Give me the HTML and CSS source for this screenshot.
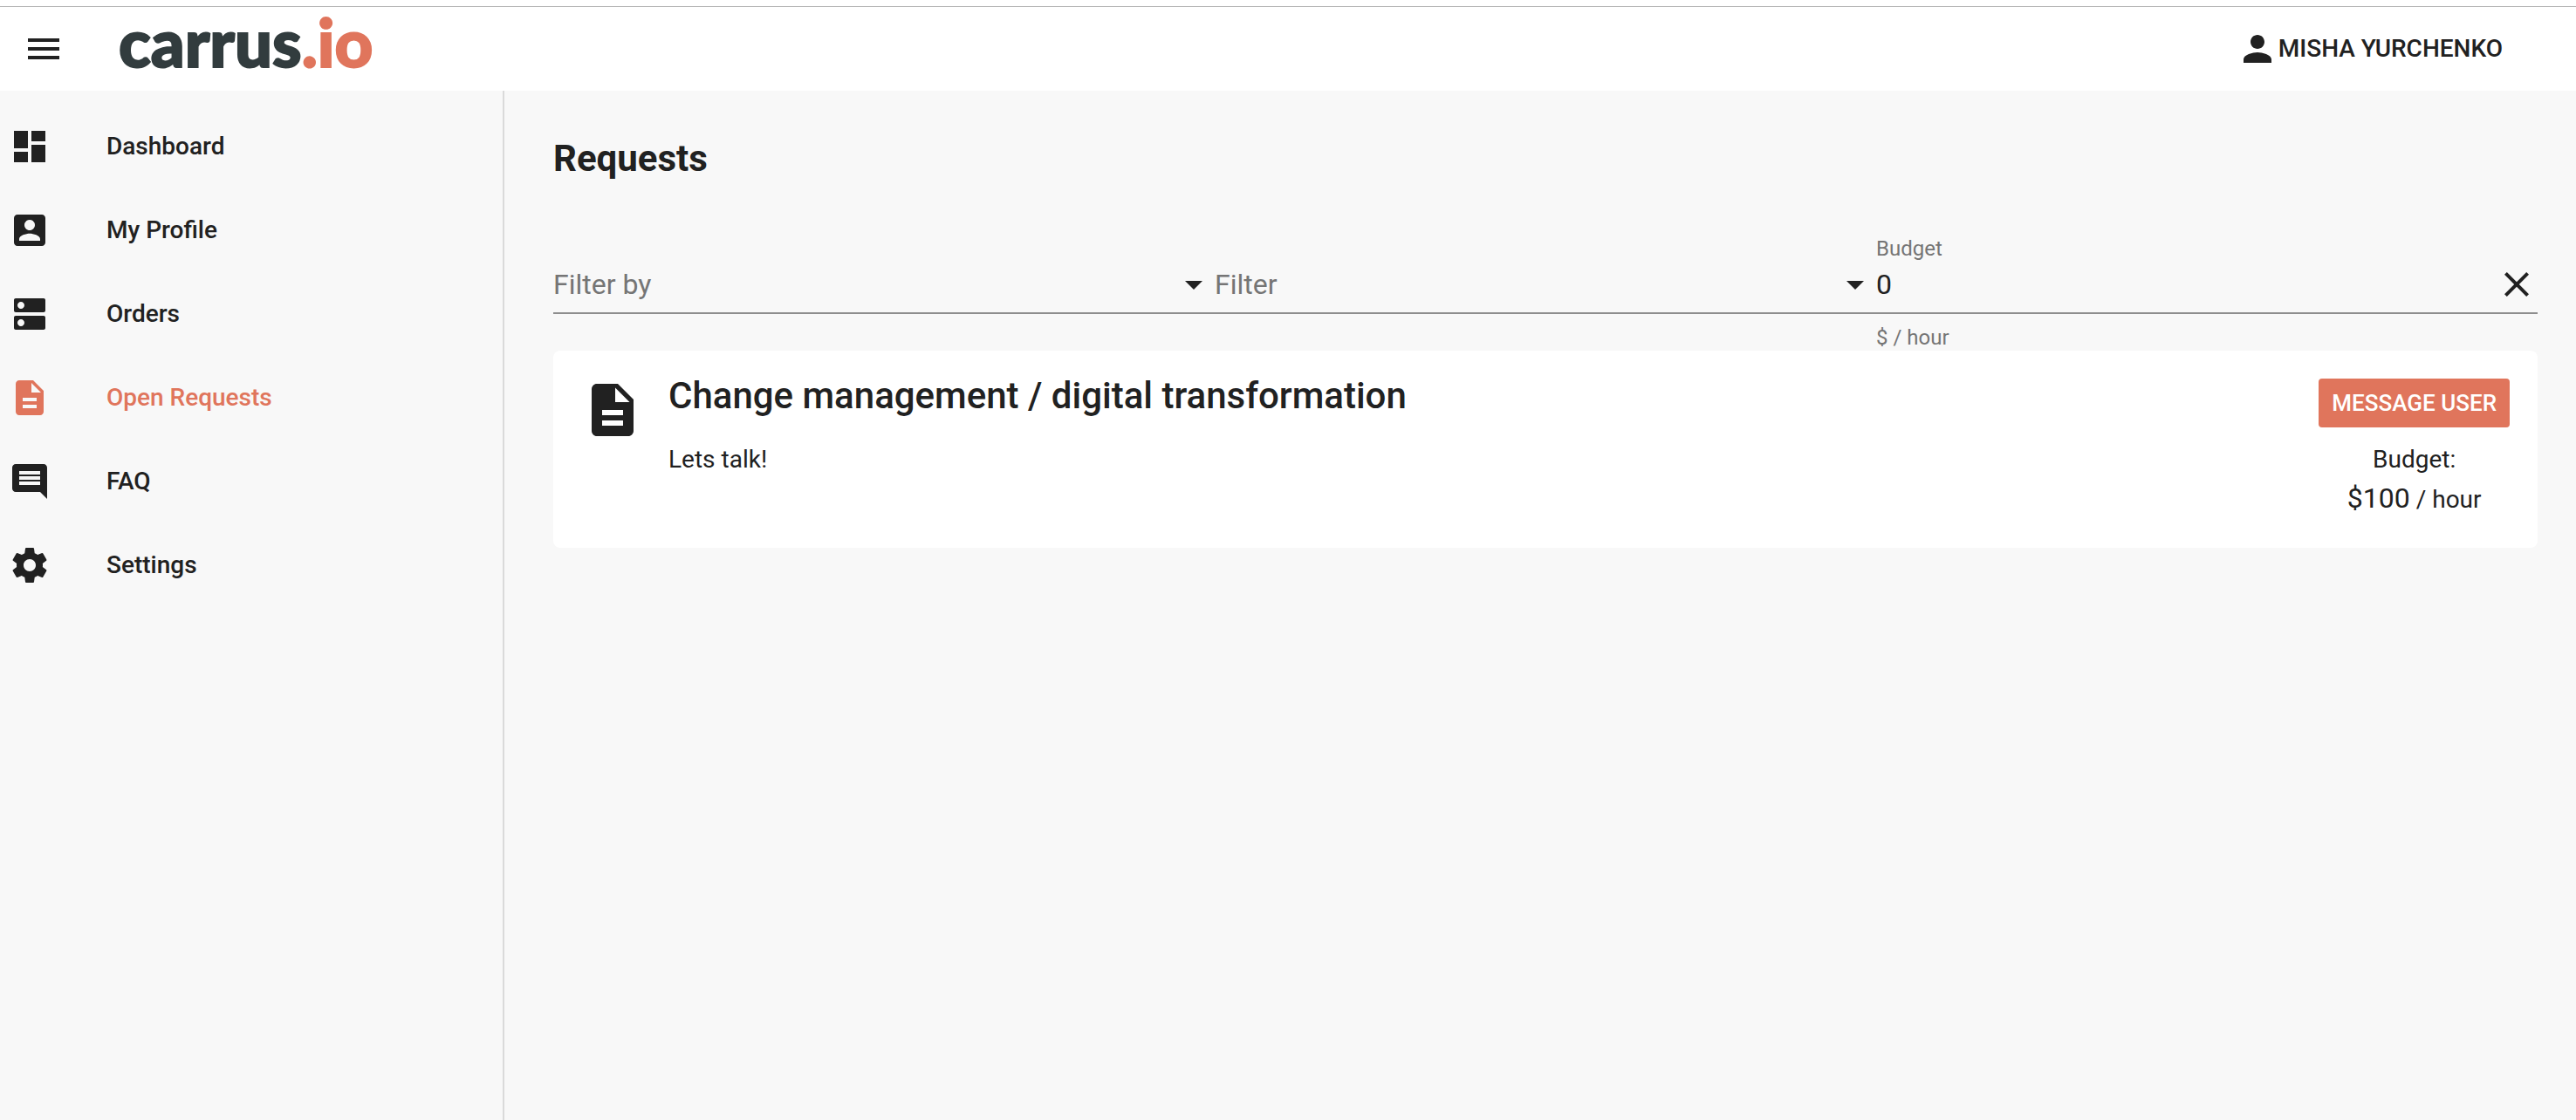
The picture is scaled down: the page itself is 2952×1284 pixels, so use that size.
FILE: index.html
```html
<!DOCTYPE html>
<html lang="en">
<head>
<meta charset="utf-8">
<meta name="viewport" content="width=device-width, initial-scale=1">
<title>Requests</title>
<link rel="stylesheet" href="styles.css">
</head>
<body>
<header class="topbar">
  <button class="icon-button" type="button" aria-label="Menu">
    <svg class="icon" viewBox="0 0 24 24"><path d="M3 18h18v-2H3v2zm0-5h18v-2H3v2zm0-7v2h18V6H3z"/></svg>
  </button>
  <a class="logo" href="#">carrus<span class="logo-accent">.io</span></a>
  <button class="user" type="button">
    <svg class="icon" viewBox="0 0 24 24"><path d="M12 12c2.21 0 4-1.79 4-4s-1.79-4-4-4-4 1.79-4 4 1.79 4 4 4zm0 2c-2.67 0-8 1.34-8 4v2h16v-2c0-2.66-5.33-4-8-4z"/></svg>
    <span>MISHA YURCHENKO</span>
  </button>
</header>
<div class="layout">
  <nav class="sidebar">
    <a class="nav-item" href="#">
      <svg class="icon" viewBox="0 0 24 24"><path d="M3 13h8V3H3v10zm0 8h8v-6H3v6zm10 0h8V11h-8v10zm0-18v6h8V3h-8z"/></svg>
      <span>Dashboard</span>
    </a>
    <a class="nav-item" href="#">
      <svg class="icon" viewBox="0 0 24 24"><path d="M3 5v14c0 1.1.89 2 2 2h14c1.1 0 2-.9 2-2V5c0-1.1-.9-2-2-2H5c-1.11 0-2 .9-2 2zm12 4c0 1.66-1.34 3-3 3s-3-1.34-3-3 1.34-3 3-3 3 1.34 3 3zm-9 8c0-2 4-3.1 6-3.1s6 1.1 6 3.1v1H6v-1z"/></svg>
      <span>My Profile</span>
    </a>
    <a class="nav-item" href="#">
      <svg class="icon" viewBox="0 0 24 24"><path d="M20 13H4c-.55 0-1 .45-1 1v6c0 .55.45 1 1 1h16c.55 0 1-.45 1-1v-6c0-.55-.45-1-1-1zM7 19c-1.1 0-2-.9-2-2s.9-2 2-2 2 .9 2 2-.9 2-2 2zM20 3H4c-.55 0-1 .45-1 1v6c0 .55.45 1 1 1h16c.55 0 1-.45 1-1V4c0-.55-.45-1-1-1zM7 9c-1.1 0-2-.9-2-2s.9-2 2-2 2 .9 2 2-.9 2-2 2z"/></svg>
      <span>Orders</span>
    </a>
    <a class="nav-item nav-item-active" href="#" aria-current="page">
      <svg class="icon" viewBox="0 0 24 24"><path d="M14 2H6c-1.1 0-1.99.9-1.99 2L4 20c0 1.1.89 2 1.99 2H18c1.1 0 2-.9 2-2V8l-6-6zm2 16H8v-2h8v2zm0-4H8v-2h8v2zm-3-5V3.500L18.500 9H13z"/></svg>
      <span>Open Requests</span>
    </a>
    <a class="nav-item" href="#">
      <svg class="icon" viewBox="0 0 24 24"><path d="M21.990 4c0-1.100-.890-2-1.990-2H4c-1.100 0-2 .900-2 2v12c0 1.100.900 2 2 2h14l4 4-.010-18zM18 14H6v-2h12v2zm0-3H6V9h12v2zm0-3H6V6h12v2z"/></svg>
      <span>FAQ</span>
    </a>
    <a class="nav-item" href="#">
      <svg class="icon" viewBox="0 0 24 24"><path d="M19.430 12.980c.040-.320.070-.640.070-.980s-.030-.660-.070-.980l2.110-1.650c.190-.150.240-.420.120-.640l-2-3.460c-.120-.220-.390-.300-.610-.220l-2.490 1c-.520-.400-1.080-.730-1.690-.980l-.380-2.650C14.460 2.180 14.250 2 14 2h-4c-.250 0-.460.180-.490.420l-.380 2.650c-.610.250-1.170.590-1.690.980l-2.490-1c-.230-.090-.490 0-.610.220l-2 3.460c-.130.220-.070.490.120.640l2.110 1.650c-.040.320-.070.650-.070.980s.030.660.070.980l-2.110 1.650c-.190.150-.240.420-.120.640l2 3.460c.120.220.390.300.610.220l2.490-1c.520.400 1.080.730 1.690.980l.380 2.650c.030.240.240.420.490.420h4c.250 0 .460-.180.490-.420l.380-2.650c.610-.250 1.170-.590 1.690-.980l2.490 1c.230.090.490 0 .610-.220l2-3.460c.120-.220.070-.490-.120-.640l-2.110-1.650zM12 15.500c-1.930 0-3.500-1.570-3.500-3.500s1.570-3.500 3.500-3.500 3.500 1.570 3.500 3.500-1.570 3.500-3.500 3.500z"/></svg>
      <span>Settings</span>
    </a>
  </nav>
  <main class="content">
    <h1 class="page-title">Requests</h1>
    <form class="filters">
      <div class="field">
        <div class="control">
          <select class="input input-empty" aria-label="Filter by"><option>Filter by</option></select>
          <svg class="icon" viewBox="0 0 24 24"><path d="M7 10l5 5 5-5z"/></svg>
        </div>
      </div>
      <div class="field">
        <div class="control">
          <select class="input input-empty" aria-label="Filter"><option>Filter</option></select>
          <svg class="icon" viewBox="0 0 24 24"><path d="M7 10l5 5 5-5z"/></svg>
        </div>
      </div>
      <div class="field">
        <label class="field-label" for="budget">Budget</label>
        <div class="control">
          <input class="input" id="budget" type="text" inputmode="numeric" value="0" aria-describedby="budget-unit">
          <button class="icon-button" type="reset" aria-label="Clear">
            <svg class="icon" viewBox="0 0 24 24"><path d="M19 6.410L17.590 5 12 10.590 6.410 5 5 6.410 10.590 12 5 17.590 6.410 19 12 13.410 17.590 19 19 17.590 13.410 12z"/></svg>
          </button>
        </div>
      </div>
      <p class="field-help" id="budget-unit">$ / hour</p>
    </form>
    <article class="card">
      <svg class="icon icon-large" viewBox="0 0 24 24"><path d="M14 2H6c-1.100 0-1.990.900-1.990 2L4 20c0 1.100.890 2 1.990 2H18c1.100 0 2-.900 2-2V8l-6-6zm2 16H8v-2h8v2zm0-4H8v-2h8v2zm-3-5V3.500L18.500 9H13z"/></svg>
      <div class="card-body">
        <h2 class="card-title">Change management / digital transformation</h2>
        <p class="card-text">Lets talk!</p>
      </div>
      <div class="card-side">
        <button class="primary-button" type="button">MESSAGE USER</button>
        <p class="budget-label">Budget:</p>
        <p class="price"><span class="amount">$100</span> / hour</p>
      </div>
    </article>
  </main>
</div>
</body>
</html>
```
FILE: styles.css
```css
* {
  box-sizing: border-box;
}

:root {
  --ink: #212121;
  --muted: #757575;
  --accent: #e0755c;
  --surface: #f8f8f8;
}

body {
  margin: 0;
  min-height: 100vh;
  display: flex;
  flex-direction: column;
  padding-top: 7px;
  background: #fff;
  color: var(--ink);
  font-family: Roboto, sans-serif;
  font-size: 28px;
  line-height: 34px;
}

h1, h2, p {
  margin: 0;
}

button, input, select {
  margin: 0;
  padding: 0;
  border: 0;
  background: none;
  color: inherit;
  font: inherit;
}

a {
  color: inherit;
  text-decoration: none;
}

.icon {
  display: block;
  flex: none;
  width: 48px;
  height: 48px;
  fill: currentColor;
}

.icon-large {
  width: 72px;
  height: 72px;
}

.icon-button {
  flex: none;
}

.topbar {
  display: flex;
  align-items: center;
  height: 97px;
  padding: 0 84px 0 26px;
  border-top: 1px solid #b4b4b4;
}

.logo {
  margin-left: 62px;
  padding-bottom: 16px;
  color: #323c3e;
  font-family: Lato, sans-serif;
  font-size: 76px;
  font-weight: 900;
  line-height: 80px;
  -webkit-text-stroke: 2px currentColor;
}

.logo-accent {
  color: var(--accent);
}

.user {
  display: flex;
  align-items: center;
  margin-left: auto;
  font-weight: 500;
}

.layout {
  flex: 1;
  display: flex;
  background: var(--surface);
}

.sidebar {
  flex: none;
  width: 578px;
  padding-top: 16px;
  border-right: 2px solid #dadada;
}

.nav-item {
  display: flex;
  align-items: center;
  gap: 64px;
  height: 96px;
  padding-left: 10px;
  font-weight: 500;
}

.nav-item-active {
  color: var(--accent);
}

.content {
  flex: 1;
  padding: 54px 44px 0 56px;
}

.page-title {
  margin-bottom: 64px;
  font-size: 42px;
  font-weight: 700;
  line-height: 48px;
}

.filters {
  display: grid;
  grid-template-columns: repeat(3, 1fr);
}

.field {
  display: flex;
  flex-direction: column;
  justify-content: flex-end;
  padding-bottom: 8px;
  border-bottom: 2px solid #8e8e8e;
}

.field-label {
  padding-bottom: 2px;
  color: var(--muted);
  font-size: 24px;
  line-height: 30px;
}

.control {
  display: flex;
  align-items: center;
}

.input {
  flex: 1;
  min-width: 0;
  height: 48px;
  appearance: none;
  outline: 0;
  font-size: 32px;
}

.input-empty {
  color: var(--muted);
}

.field-help {
  grid-column: 3;
  padding-top: 12px;
  color: var(--muted);
  font-size: 24px;
  line-height: 30px;
}

.card {
  display: flex;
  align-items: flex-start;
  gap: 28px;
  padding: 32px 32px 30px;
  border-radius: 8px;
  background: #fff;
}

.card-body {
  flex: 1;
}

.card-title {
  margin-bottom: 36px;
  font-size: 42px;
  font-weight: 500;
  line-height: 40px;
}

.card-side {
  display: flex;
  flex-direction: column;
  align-items: center;
}

.primary-button {
  height: 56px;
  margin-bottom: 20px;
  padding: 0 15px;
  border-radius: 4px;
  background: var(--accent);
  color: #fff;
  font-size: 26px;
  font-weight: 500;
}

.price {
  padding-top: 2px;
  line-height: 50px;
}

.amount {
  font-size: 32px;
}
```
